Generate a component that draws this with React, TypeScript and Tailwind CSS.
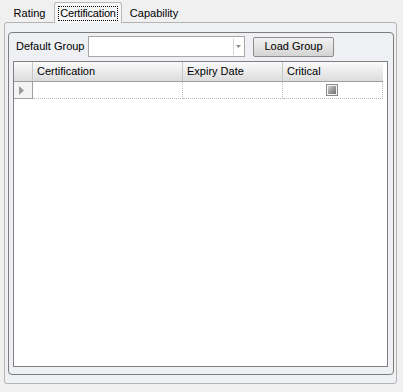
import React from "react";

const font = "font-['Liberation_Sans',Arial,sans-serif] text-[11px] text-black";

function Tab({ label, active, w }: { label: string; active?: boolean; w: string }) {
  if (active) {
    return (
      <div className={`relative z-10 -mb-px flex h-[21px] items-center justify-center rounded-t-[3px] border border-b-0 border-[#b9b9b9] bg-[#f7f7f8] ${w}`}>
        <span className="border border-dotted border-black px-[1px] leading-[13px] tracking-[-0.2px]">{label}</span>
      </div>
    );
  }
  return (
    <div className={`mt-[2px] flex h-[18px] items-center justify-center ${w}`}>
      <span>{label}</span>
    </div>
  );
}

function RowArrow() {
  return (
    <svg width="5" height="9" viewBox="0 0 5 9">
      <path d="M0 0 L5 4.5 L0 9 Z" fill="#9a9a9a" />
    </svg>
  );
}

export default function App() {
  return (
    <div className={`h-[392px] w-[403px] overflow-hidden bg-[#f0f0f0] ${font}`}>
      {/* ── Tab strip ─────────────────── */}
      <div className="flex h-[22px] items-end pl-[5px] pt-[2px]">
        <Tab label="Rating" w="w-[49px]" />
        <Tab label="Certification" active w="w-[68px]" />
        <Tab label="Capability" w="w-[64px]" />
      </div>

      {/* ── Tab page ─────────────────── */}
      <div className="ml-[4px] h-[362px] w-[393px] rounded-[3px] border border-[#b4b4b4] bg-[#eef0f3] pl-[3px] pt-[9px]">
        <div className="flex h-[343px] w-[386px] flex-col rounded-[4px] border border-[#7d7d7d] pl-[4px] pt-[3px]">
          {/* toolbar row */}
          <div className="flex h-[21px] items-center">
            <span className="ml-[3px] w-[72px]">Default Group</span>
            <div className="flex h-[21px] w-[157px] items-stretch border border-[#a7a7a7] bg-white">
              <div className="flex-1" />
              <div className="my-[1px] mr-[1px] flex w-[10px] items-center justify-center border-l border-[#d8d8d8]">
                <svg width="5" height="3" viewBox="0 0 5 3">
                  <path d="M0 0 L5 0 L2.5 3 Z" fill="#8a8a8a" />
                </svg>
              </div>
            </div>
            <div className="ml-[8px] flex h-[20px] w-[81px] items-center justify-center rounded-[2px] border border-[#8c8c8c] bg-gradient-to-b from-[#f2f2f2] to-[#d4d4d4]">
              Load Group
            </div>
          </div>

          {/* grid */}
          <div className="mt-[4px] flex h-[306px] w-[375px] flex-col border border-[#7f7f7f] bg-white">
            {/* header */}
            <div className="flex h-[20px] w-[369px] border-b border-[#a0a0a0] bg-gradient-to-b from-[#fbfbfb] to-[#dcdcdc]">
              <div className="w-[19px] border-r border-[#c8c8c8]" />
              <div className="flex w-[150px] items-center border-r border-[#c8c8c8] pl-[4px]">Certification</div>
              <div className="flex w-[100px] items-center border-r border-[#c8c8c8] pl-[4px]">Expiry Date</div>
              <div className="flex w-[100px] items-center pl-[4px]">Critical</div>
            </div>
            {/* row */}
            <div className="flex h-[17px] w-[369px]">
              <div className="flex w-[19px] items-center border-r border-b border-[#a0a0a0] bg-[#f4f4f4] pl-[5px]">
                <RowArrow />
              </div>
              <div className="w-[150px] border-r border-b border-dotted border-[#bdbdbd]" />
              <div className="w-[100px] border-r border-b border-dotted border-[#bdbdbd]" />
              <div className="flex w-[100px] items-center justify-center border-r border-b border-dotted border-[#bdbdbd] pr-[2px]">
                <div className="flex h-[12px] w-[12px] items-center justify-center border border-[#8a8a8a] bg-[#f4f4f4]">
                  <div className="h-[8px] w-[8px] bg-gradient-to-br from-[#cfcfcf] to-[#6e6e6e]" />
                </div>
              </div>
            </div>
            <div className="flex-1" />
          </div>
        </div>
      </div>
    </div>
  );
}
